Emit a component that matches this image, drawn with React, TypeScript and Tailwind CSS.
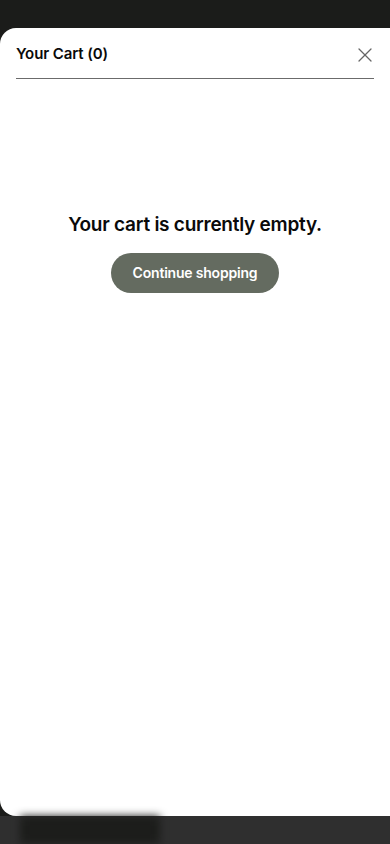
import { X } from 'lucide-react';

export default function App() {
  return (
    <div
      className="h-[844px] w-[390px] overflow-hidden bg-[#1b1c1a] flex flex-col"
      style={{ fontFamily: 'Inter, "Noto Sans", sans-serif' }}
    >
      <div className="h-[28px] shrink-0" />
      <div className="h-[788px] shrink-0 bg-white rounded-l-2xl flex flex-col">
        {/* header */}
        <div className="mx-4 h-[51px] pt-[3px] border-b border-[#6b6b6b] flex items-center justify-between">
          <h2 className="text-[15px] font-semibold text-[#0a0a0a] tracking-[-0.1px]">Your Cart (0)</h2>
          <button className="-mr-[3px] text-[#666]" aria-label="Close">
            <X size={24} strokeWidth={1.3} />
          </button>
        </div>

        {/* empty state */}
        <div className="flex flex-col items-center pt-[132px]">
          <p className="text-[19px] font-semibold text-[#0a0a0a] tracking-[-0.25px]">
            Your cart is currently empty.
          </p>
          <button className="mt-[13px] h-[40px] w-[168px] rounded-full bg-[#646b60] text-white text-[14px] font-semibold tracking-[-0.2px]">
            Continue shopping
          </button>
        </div>
      </div>
      <div className="flex-1 bg-[#2f2f2f] flex">
        <div className="ml-[20px] w-[140px] h-full bg-[#1c1d1b] blur-[4px]" />
      </div>
    </div>
  );
}
